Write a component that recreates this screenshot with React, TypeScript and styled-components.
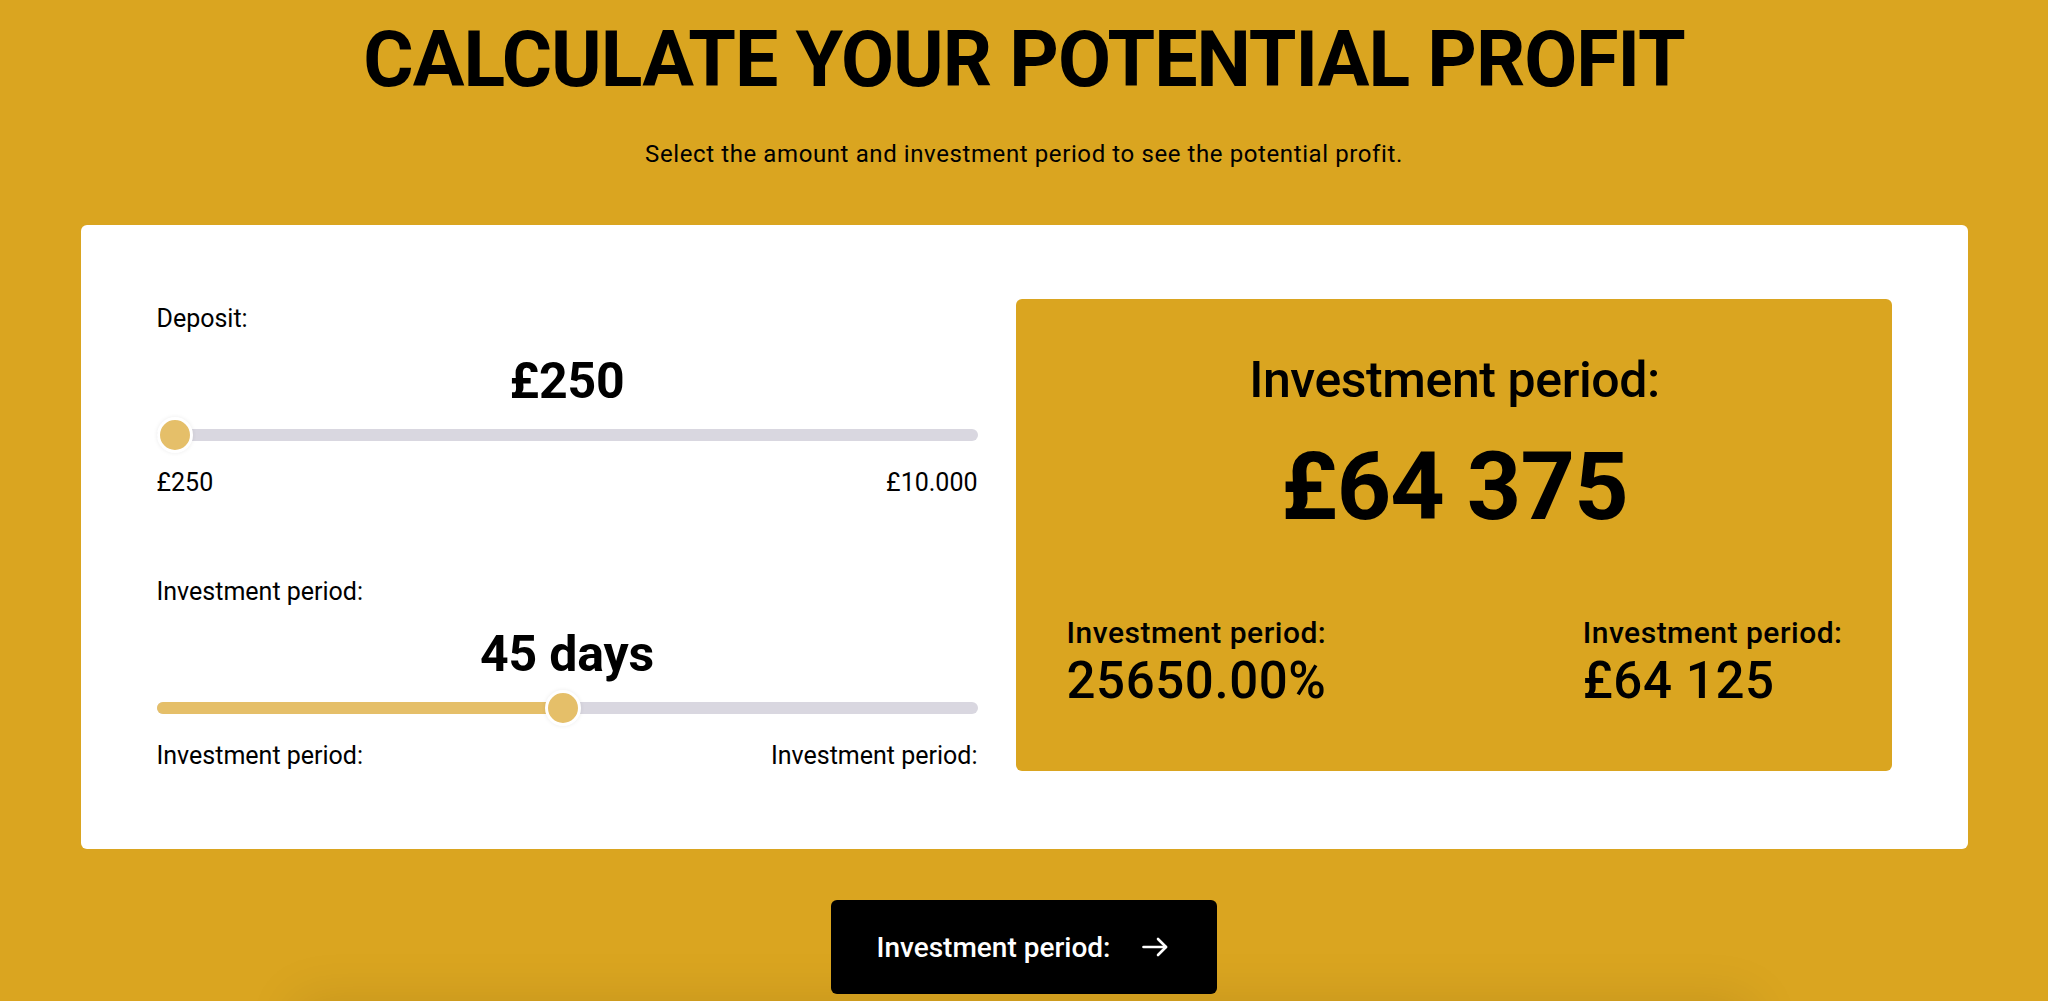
import React from "react";
import styled, { createGlobalStyle } from "styled-components";

const GOLD = "#DAA520";
const THUMB = "#E5BF69";
const TRACK = "#D9D7E0";

const GlobalStyle = createGlobalStyle`
  html, body { margin: 0; padding: 0; background: ${GOLD}; }
  body {
    font-family: Roboto, "Liberation Sans", Arial, sans-serif;
    color: #000;
    overflow: hidden;
  }
  * { box-sizing: border-box; }
`;

const Page = styled.main`
  min-height: 1001px;
  display: flex;
  flex-direction: column;
  align-items: center;
  padding-top: 22px;
`;

const Title = styled.h1`
  margin: 0;
  font-size: 77px;
  line-height: 77px;
  font-weight: 700;
  letter-spacing: -1px;
  text-transform: uppercase;
`;

const Subtitle = styled.p`
  margin: 41px 0 0;
  font-size: 24px;
  line-height: 28px;
  letter-spacing: 0.6px;
`;

const Card = styled.section`
  margin-top: 57px;
  width: 1887px;
  background: #fff;
  border-radius: 6px;
  padding: 74px 76px 78px;
  display: grid;
  grid-template-columns: 821px 1fr;
  column-gap: 38px;
`;

const Controls = styled.div`
  display: flex;
  flex-direction: column;
  gap: 79px;
  padding-top: 5px;
`;

const Group = styled.div`
  display: flex;
  flex-direction: column;
`;

const Label = styled.span`
  font-size: 25px;
  line-height: 30px;
`;

const Value = styled.div`
  margin-top: 17px;
  text-align: center;
  font-size: 50px;
  line-height: 60px;
  font-weight: 700;
  letter-spacing: -0.2px;
`;

const Slider = styled.div`
  position: relative;
  margin-top: 6px;
  height: 36px;
  display: flex;
  align-items: center;
`;

const Track = styled.div`
  height: 12px;
  width: 100%;
  border-radius: 6px;
  background: ${TRACK};
  overflow: hidden;
`;

const Fill = styled.div`
  height: 100%;
  background: ${THUMB};
`;

const Thumb = styled.div`
  position: absolute;
  top: 0;
  width: 36px;
  height: 36px;
  border-radius: 50%;
  background: ${THUMB};
  border: 3px solid #fff;
  box-shadow: 0 0 4px rgba(0, 0, 0, 0.08);
`;

const RangeRow = styled.div`
  margin-top: 15px;
  display: flex;
  justify-content: space-between;
  font-size: 25px;
  line-height: 30px;
`;

const Result = styled.div`
  background: ${GOLD};
  border-radius: 6px;
  padding: 51px 49px 6px 51px;
  display: flex;
  flex-direction: column;
`;

const ResultTitle = styled.h2`
  margin: 0;
  text-align: center;
  font-size: 50px;
  line-height: 60px;
  font-weight: 500;
  letter-spacing: -0.4px;
`;

const ResultAmount = styled.div`
  margin-top: 20px;
  text-align: center;
  font-size: 95px;
  line-height: 114px;
  font-weight: 700;
  letter-spacing: -0.8px;
`;

const Stats = styled.div`
  margin-top: 71px;
  display: flex;
  justify-content: space-between;
`;

const Stat = styled.div`
  display: flex;
  flex-direction: column;
`;

const StatLabel = styled.span`
  font-size: 30px;
  line-height: 36px;
  font-weight: 500;
  letter-spacing: 0.5px;
`;

const StatValue = styled.span`
  font-size: 51px;
  line-height: 60px;
  font-weight: 500;
  letter-spacing: 0.6px;
`;

const Cta = styled.button`
  margin-top: 51px;
  width: 386px;
  height: 94px;
  background: #000;
  color: #fff;
  border: none;
  border-radius: 6px;
  display: flex;
  align-items: center;
  justify-content: center;
  gap: 31px;
  font-family: inherit;
  font-size: 28px;
  font-weight: 500;
  padding: 0 46px 0 42px;
  cursor: pointer;
`;

const Teaser = styled.div`
  margin-top: 14px;
  width: 1440px;
  height: 200px;
  background: ${GOLD};
  box-shadow: 0 0 50px 8px rgba(0, 0, 0, 0.1);
  flex-shrink: 0;
`;

type RangeProps = {
  label: string;
  value: string;
  pos: number;
  min: string;
  max: string;
  filled?: boolean;
};

function RangeControl({ label, value, pos, min, max, filled }: RangeProps) {
  return (
    <Group>
      <Label>{label}</Label>
      <Value>{value}</Value>
      <Slider>
        <Track>
          <Fill style={{ width: filled ? `calc(${pos} * (100% - 36px) + 18px)` : "0px" }} />
        </Track>
        <Thumb style={{ left: `calc(${pos} * (100% - 36px))` }} />
      </Slider>
      <RangeRow>
        <span>{min}</span>
        <span>{max}</span>
      </RangeRow>
    </Group>
  );
}

const Arrow = () => (
  <svg width="26" height="20" viewBox="0 0 26 20" fill="none" stroke="#fff" strokeWidth="2.6" strokeLinecap="round" strokeLinejoin="round">
    <path d="M1.5 10H24" />
    <path d="M16 2l8 8-8 8" />
  </svg>
);

export default function App() {
  return (
    <>
      <GlobalStyle />
      <Page>
        <Title>Calculate your potential profit</Title>
        <Subtitle>Select the amount and investment period to see the potential profit.</Subtitle>
        <Card>
          <Controls>
            <RangeControl label="Deposit:" value="£250" pos={0} min="£250" max="£10.000" />
            <RangeControl
              label="Investment period:"
              value="45 days"
              pos={0.4955}
              min="Investment period:"
              max="Investment period:"
              filled
            />
          </Controls>
          <Result>
            <ResultTitle>Investment period:</ResultTitle>
            <ResultAmount>£64 375</ResultAmount>
            <Stats>
              <Stat>
                <StatLabel>Investment period:</StatLabel>
                <StatValue>25650.00%</StatValue>
              </Stat>
              <Stat>
                <StatLabel>Investment period:</StatLabel>
                <StatValue>£64 125</StatValue>
              </Stat>
            </Stats>
          </Result>
        </Card>
        <Cta>
          <span>Investment period:</span>
          <Arrow />
        </Cta>
        <Teaser />
      </Page>
    </>
  );
}
